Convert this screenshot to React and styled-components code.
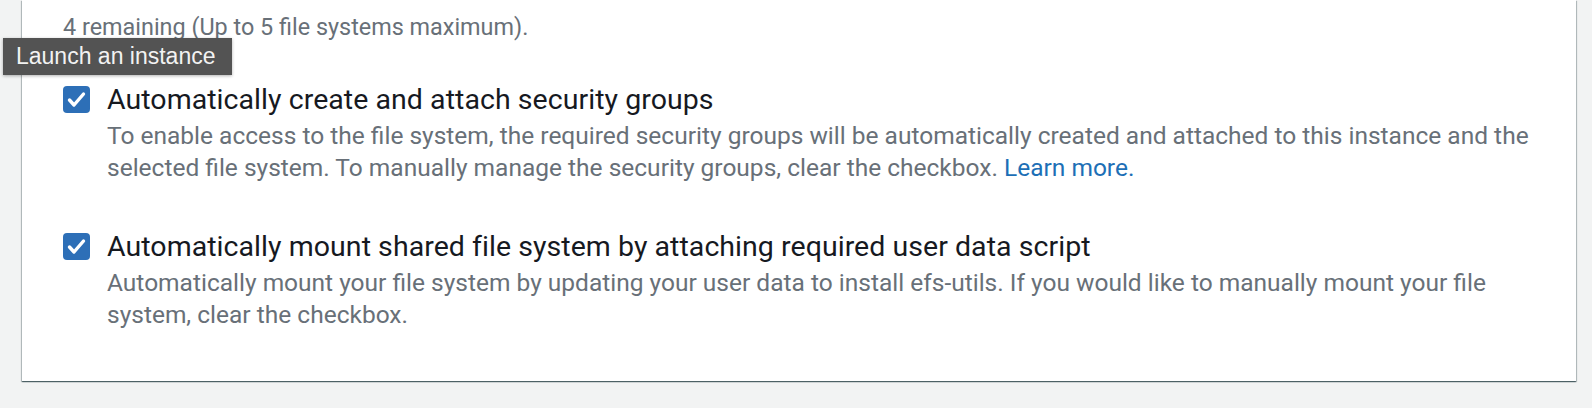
import React from 'react';
import styled, { createGlobalStyle } from 'styled-components';

const Global = createGlobalStyle`
  html, body {
    margin: 0;
    padding: 0;
    background: #f2f3f3;
  }
  body {
    font-family: Roboto, "Liberation Sans", sans-serif;
    -webkit-font-smoothing: antialiased;
  }
`;

const Page = styled.div`
  position: relative;
  height: 408px;
  overflow: hidden;
`;

const Card = styled.section`
  margin-left: 22px;
  width: 1554px;
  box-sizing: border-box;
  background: #fff;
  padding: 11px 31px 50px 41px;
  box-shadow: 0 1px 1px 0 rgba(0, 28, 36, 0.5), 1px 1px 1px 0 rgba(0, 28, 36, 0.2),
    -1px 1px 1px 0 rgba(0, 28, 36, 0.2);
`;

const Hint = styled.div`
  font-size: 23.4px;
  line-height: 32px;
  color: #687078;
`;

const Options = styled.div`
  margin-top: 42px;
  display: flex;
  flex-direction: column;
  gap: 47.5px;
`;

const Option = styled.label`
  display: grid;
  grid-template-columns: 27px 1fr;
  column-gap: 17px;
  align-items: start;
`;

const Box = styled.span`
  width: 27px;
  height: 27px;
  margin-top: 1px;
  border-radius: 4px;
  background: #2d6fb7;
  display: flex;
  align-items: center;
  justify-content: center;
`;

const Title = styled.div`
  font-size: 28.5px;
  line-height: 29px;
  letter-spacing: 0.05px;
  color: #16191f;
`;

const Desc = styled.div`
  margin-top: 6px;
  max-width: 1445px;
  font-size: 24.5px;
  line-height: 32px;
  color: #687078;
`;

const Link = styled.a`
  color: #1d6fb6;
  text-decoration: none;
`;

const Tooltip = styled.div`
  position: absolute;
  left: 3px;
  top: 38px;
  width: 229px;
  height: 37px;
  box-sizing: border-box;
  padding-left: 13px;
  background: #535353;
  color: #f2f2f2;
  font-family: "Liberation Sans", Arial, sans-serif;
  font-size: 23px;
  line-height: 37px;
  box-shadow: 0 1px 3px rgba(0, 0, 0, 0.3);
  white-space: nowrap;
`;

function Check() {
  return (
    <Box>
      <svg width="27" height="27" viewBox="0 0 27 27">
        <polyline points="6.5,14 11,19 20.5,8" fill="none" stroke="#fff" strokeWidth="3.4" strokeLinecap="round" strokeLinejoin="round" />
      </svg>
    </Box>
  );
}

const options = [
  {
    title: 'Automatically create and attach security groups',
    desc: 'To enable access to the file system, the required security groups will be automatically created and attached to this instance and the selected file system. To manually manage the security groups, clear the checkbox.',
    link: true,
  },
  {
    title: 'Automatically mount shared file system by attaching required user data script',
    desc: 'Automatically mount your file system by updating your user data to install efs-utils. If you would like to manually mount your file system, clear the checkbox.',
  },
];

export default function App() {
  return (
    <Page>
      <Global />
      <Card>
        <Hint>4 remaining (Up to 5 file systems maximum).</Hint>
        <Options>
          {options.map((o) => (
            <Option key={o.title}>
              <Check />
              <div>
                <Title>{o.title}</Title>
                <Desc>
                  {o.desc}
                  {o.link && <> <Link href="#">Learn more.</Link></>}
                </Desc>
              </div>
            </Option>
          ))}
        </Options>
      </Card>
      <Tooltip>Launch an instance</Tooltip>
    </Page>
  );
}
